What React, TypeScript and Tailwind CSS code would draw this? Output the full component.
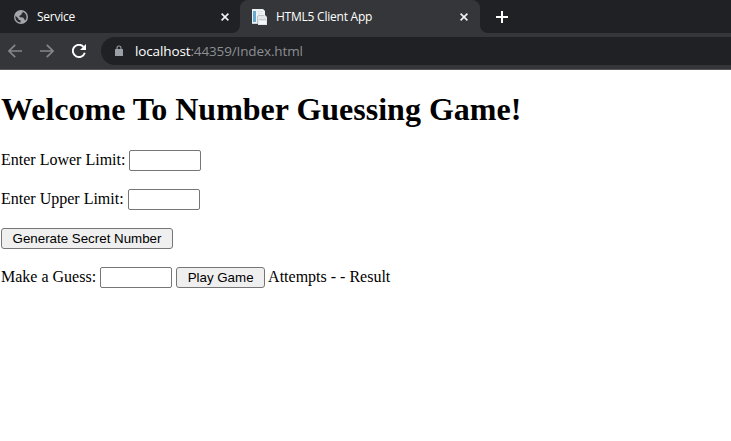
import type { InputHTMLAttributes, ReactNode } from 'react';

function GlobeIcon() {
  return (
    <svg width="14" height="14" viewBox="0 0 14 14" className="block shrink-0">
      <circle cx="7" cy="7" r="7" fill="#a3a6aa" />
      <path
        d="M1.5 5.8 L4.2 8.2 L4.8 9.7 L6.6 10.3 L6.6 12.5 C3.6 12.3 1.4 10 1.4 7Z M8.6 1.7 C10.9 2.4 12.5 4.5 12.5 7 C12.5 8.4 12 9.6 11.2 10.6 L10.2 9.2 L9.4 7.7 L5.4 7.1 L5.4 5.8 L7.2 5 L7.4 3.8 L8.6 3Z"
        fill="#292b2e"
      />
    </svg>
  );
}

function PageIcon() {
  return (
    <svg width="17" height="16" viewBox="0 0 17 16" className="block shrink-0">
      <path d="M1 0h11l2 2v13H1z" fill="#eff2f4" />
      <path d="M2 2h3v11H2z" fill="#68a9cf" />
      <path d="M7 2h5v1H7zM7 4h4v1H7z" fill="#dce1e4" />
      <path d="M7 6h7l2 2v8H7z" fill="#e2e6e9" />
      <path d="M7 6h6v1H7zM6 7h1v8H6z" fill="#bac2c8" />
      <path d="M8 10h7v1H8z" fill="#c3cbd0" />
      <path d="M8 12h7v3H8z" fill="#f5f7f8" />
      <path d="M1 14h5v1H1z" fill="#c8d2d8" />
    </svg>
  );
}

function CloseIcon() {
  return (
    <svg width="8" height="8" viewBox="0 0 8 8" className="block shrink-0">
      <path d="M.6.6l6.8 6.8M7.4.6L.6 7.4" stroke="#f1f3f4" strokeWidth="1.6" />
    </svg>
  );
}

function Arrow({ forward = false }: { forward?: boolean }) {
  return (
    <svg width="14" height="14" viewBox="0 0 14 14" className={forward ? 'block shrink-0 rotate-180' : 'block shrink-0'}>
      <path d="M14 7H1.3M7.2.8L1 7l6.2 6.2" fill="none" stroke="#84868a" strokeWidth="1.7" />
    </svg>
  );
}

function ReloadIcon() {
  return (
    <svg width="14" height="14" viewBox="0 0 14 14" className="block shrink-0">
      <path d="M12.8 8.7A6.1 6.1 0 1 1 11.5 2.8" fill="none" stroke="#fff" strokeWidth="1.9" />
      <path d="M14 0v6H8z" fill="#fff" />
    </svg>
  );
}

function Caption({ children }: { children: ReactNode }) {
  return <span className="pb-[2px] leading-[18px] whitespace-nowrap">{children}</span>;
}

function NumberInput(props: InputHTMLAttributes<HTMLInputElement>) {
  return <input {...props} className="ml-1 h-[21px] w-[72px] rounded-[2px] border border-[#767676] bg-white px-0.5 font-['Liberation_Sans',Arial,sans-serif] text-[13.333px]" />;
}

const buttonClass =
  "h-[21px] rounded-[3px] border border-[#767676] bg-[#efefef] text-center font-['Liberation_Sans',Arial,sans-serif] text-[13.333px] leading-[19px] whitespace-nowrap";

export default function App() {
  return (
    <div className="flex h-[441px] w-[731px] flex-col overflow-hidden bg-white">
      <header className="h-[70px] shrink-0 border-b border-[#55575a] bg-[#35363a] font-['Open_Sans','Noto_Sans',sans-serif]">
        <div className="flex h-[33px] bg-[#35363a] text-[12px] leading-[16px] text-white">
          <div className="flex w-[240px] items-center rounded-br-[8px] bg-[#202124] pr-[11px] pl-[14px]">
            <GlobeIcon />
            <span className="ml-[9px] flex-1 tracking-[-0.25px]">Service</span>
            <CloseIcon />
          </div>
          <div className="flex w-[240px] bg-[#202124]">
            <div className="flex w-full items-center rounded-t-[8px] bg-[#35363a] pr-[12px] pl-[11px]">
              <PageIcon />
              <span className="ml-[8px] flex-1 tracking-[-0.23px]">HTML5 Client App</span>
              <CloseIcon />
            </div>
          </div>
          <div className="flex flex-1 items-center rounded-bl-[8px] bg-[#202124] pl-[16px]">
            <svg width="12" height="12" viewBox="0 0 12 12">
              <path d="M6 0v12M0 6h12" stroke="#fff" strokeWidth="2" />
            </svg>
          </div>
        </div>
        <div className="flex h-[36px] items-center pl-[8px]">
          <Arrow />
          <div className="ml-[18px]"><Arrow forward /></div>
          <div className="ml-[18px]"><ReloadIcon /></div>
          <div className="ml-[15px] flex h-[28px] flex-1 items-center rounded-l-full bg-[#202124] pl-[14px]">
            <svg width="8" height="12" viewBox="0 0 8 12" className="block">
              <path d="M2 5V3a2 2 0 0 1 4 0v2" fill="none" stroke="#9aa0a6" strokeWidth="1.1" />
              <rect y="4" width="8" height="7" rx=".6" fill="#9aa0a6" />
            </svg>
            <div className="ml-[12px] text-[13.5px] leading-[18px] tracking-[-0.13px] text-[#8c8f93]">
              <span className="text-white">localhost</span>:44359/Index.html
            </div>
          </div>
        </div>
      </header>
      <main className="px-px pt-[21px] font-['Liberation_Serif','Times_New_Roman',serif] text-[16px] leading-[18px] text-black">
        <h1 className="h-[37px] text-[32px] leading-[37px] font-bold whitespace-nowrap">Welcome To Number Guessing Game!</h1>
        <div className="mt-[22px] flex flex-col gap-[18px]">
          <label className="flex h-[21px] items-center"><Caption>Enter Lower Limit:</Caption><NumberInput /></label>
          <label className="flex h-[21px] items-center"><Caption>Enter Upper Limit:</Caption><NumberInput /></label>
          <button className={`${buttonClass} w-[172px]`}>Generate Secret Number</button>
          <div className="flex h-[21px] items-center">
            <label className="flex items-center"><Caption>Make a Guess:</Caption><NumberInput /></label>
            <button className={`${buttonClass} mr-[3px] ml-1 w-[89px]`}>Play Game</button>
            <Caption>Attempts - - Result</Caption>
          </div>
        </div>
      </main>
    </div>
  );
}
